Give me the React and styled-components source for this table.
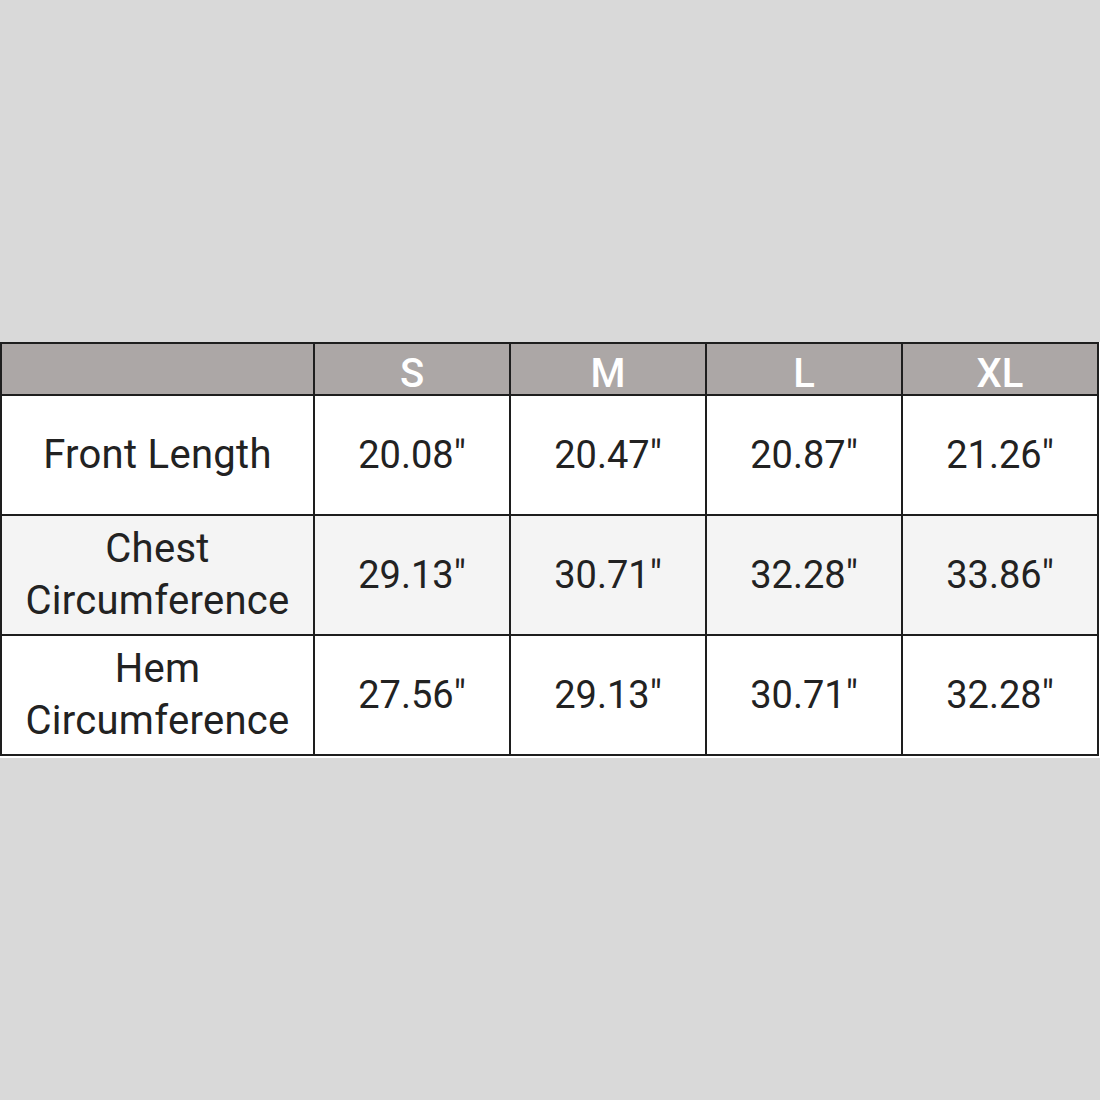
import React from 'react';
import styled, { createGlobalStyle } from 'styled-components';

const GlobalStyle = createGlobalStyle`
  html, body {
    margin: 0;
    padding: 0;
    background: #d9d9d9;
  }
`;

const Page = styled.div`
  min-height: 1100px;
  display: flex;
  align-items: center;
  font-family: Roboto, "Liberation Sans", sans-serif;
`;

const Sheet = styled.div`
  background: #ffffff;
  padding: 0 3px 2px 0;
`;

const Table = styled.table`
  border-collapse: collapse;
  table-layout: fixed;
  width: 1097px;
`;

const Col = styled.col`
  width: ${p => p.$w}px;
`;

const HeadCell = styled.th`
  background: #aca7a6;
  color: #ffffff;
  font-weight: 500;
  font-size: 40px;
  height: 50px;
  padding: 0;
  line-height: 40px;
  border: 2px solid #1e1e1e;
  text-align: center;
  vertical-align: bottom;
`;

const Row = styled.tr`
  background: ${p => (p.$shade ? '#f4f4f4' : '#ffffff')};
`;

const Cell = styled.td`
  height: 118px;
  padding: 0;
  border: 2px solid #1e1e1e;
  text-align: center;
  color: #222222;
  font-size: ${p => (p.$num ? '38px' : '40px')};
  line-height: 52px;
  letter-spacing: ${p => (p.$num ? '0px' : '0.3px')};
`;

const sizes = ['S', 'M', 'L', 'XL'];

const rows = [
  { label: ['Front Length'], values: ['20.08"', '20.47"', '20.87"', '21.26"'] },
  { label: ['Chest', 'Circumference'], values: ['29.13"', '30.71"', '32.28"', '33.86"'] },
  { label: ['Hem', 'Circumference'], values: ['27.56"', '29.13"', '30.71"', '32.28"'] },
];

export default function App() {
  return (
    <Page>
      <GlobalStyle />
      <Sheet>
        <Table>
          <colgroup>
            <Col $w={313} />
            {sizes.map(s => (
              <Col key={s} $w={196} />
            ))}
          </colgroup>
          <thead>
            <tr>
              <HeadCell />
              {sizes.map(s => (
                <HeadCell key={s}>{s}</HeadCell>
              ))}
            </tr>
          </thead>
          <tbody>
            {rows.map((row, i) => (
              <Row key={i} $shade={i === 1}>
                <Cell>
                  {row.label.map((l, j) => (
                    <div key={j}>{l}</div>
                  ))}
                </Cell>
                {row.values.map((v, j) => (
                  <Cell key={j} $num>{v}</Cell>
                ))}
              </Row>
            ))}
          </tbody>
        </Table>
      </Sheet>
    </Page>
  );
}
